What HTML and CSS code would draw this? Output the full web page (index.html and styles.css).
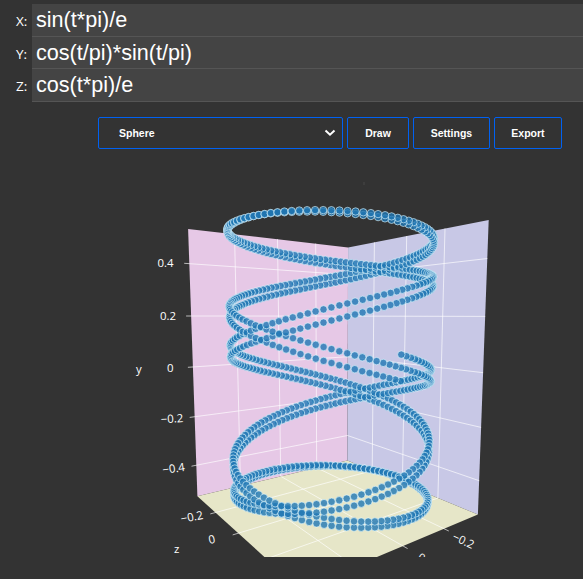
FILE: index.html
```html
<!DOCTYPE html>
<html lang="en"><head><meta charset="utf-8"><title>Parametric plot</title><link rel="stylesheet" href="styles.css"></head>
<body>
<form class="equations">
<label class="row"><span class="axis">X:</span><span class="field">sin(t*pi)/e</span></label>
<label class="row"><span class="axis">Y:</span><span class="field">cos(t/pi)*sin(t/pi)</span></label>
<label class="row"><span class="axis">Z:</span><span class="field">cos(t*pi)/e</span></label>
</form>
<div class="toolbar">
<button class="btn select" type="button">Sphere<svg class="chevron" viewBox="0 0 12 8"><path d="M1.5 1.5 6 5.7 10.5 1.5"/></svg></button>
<button class="btn draw" type="button">Draw</button>
<button class="btn settings" type="button">Settings</button>
<button class="btn export" type="button">Export</button>
</div>
<svg class="plot" viewBox="0 157 583 400" width="583" height="400">
<g id="walls"></g><g id="grid"></g><g id="curve"></g>
<g class="ticks">
<text x="157.500" y="267">0.4</text>
<text x="160" y="320">0.2</text>
<text x="167" y="372">0</text>
<text transform="translate(161 423.500) rotate(-4)">−0.2</text>
<text transform="translate(163 474) rotate(-8)">−0.4</text>
<text transform="translate(181.500 523) rotate(-11)">−0.2</text>
<text transform="translate(209.500 544) rotate(-13)">0</text>
<text transform="translate(451.500 539.500) rotate(25)">−0.2</text>
<text transform="translate(417 560) rotate(25)">0</text>
<text x="136" y="373">y</text>
<text x="174" y="553">z</text>
</g>
<rect class="speck" x="363" y="182" width="2" height="3"/>
</svg>
<script>
// Half-extents of the axes box
const a = .39, h = .53;
// Camera projection coefficients
const m = [-1.4291, -.0019, 1.0445, .006, .1228, -1.7605, .1718, -.0021, -.346, -.0651, -.472];
function project(x, y, z) {
  const w = m[8] * x + m[9] * y + m[10] * z + 1;
  return [330 + 150 * (m[0] * x + m[1] * y + m[2] * z + m[3]) / w,
          370 + 150 * (m[4] * x + m[5] * y + m[6] * z + m[7]) / w, w];
}
const pt = p => project(...p).slice(0, 2).map(v => v.toFixed(1)).join(',');
const poly = (c, ...ps) => `<polygon class="${c}" points="${ps.map(pt).join(' ')}"/>`;
const line = (...ps) => `<polyline points="${ps.map(pt).join(' ')}"/>`;
document.getElementById('walls').innerHTML =
  poly('left', [-a, h, -a], [a, h, -a], [a, -h, -a], [-a, -h, -a]) +
  poly('right', [-a, h, -a], [-a, h, a], [-a, -h, a], [-a, -h, -a]) +
  poly('floor', [-a, -h, -a], [a, -h, -a], [a, -h, a], [-a, -h, a]);
// Grid lines run slightly past the box to form the tick marks
let g = '';
const o = .41;
for (const v of [-.2, 0, .2]) g += line([v, h, -a], [v, -h, -a], [v, -h, o]) + line([-a, h, v], [-a, -h, v], [o, -h, v]);
for (const v of [-.4, -.2, 0, .2, .4]) g += line([o, v, -a], [-a, v, -a], [-a, v, a]);
document.getElementById('grid').innerHTML = g;
// Curve samples, drawn from far to near
const dots = [];
for (let i = 0; i <= 1000; i++) {
  const t = i * .02;
  dots.push(project(Math.sin(t * Math.PI) / Math.E, Math.cos(t / Math.PI) * Math.sin(t / Math.PI), Math.cos(t * Math.PI) / Math.E));
}
dots.sort((p, q) => q[2] - p[2]);
document.getElementById('curve').innerHTML = dots.map(d => `<circle cx="${d[0].toFixed(1)}" cy="${d[1].toFixed(1)}" r="3.7"/>`).join('');
</script></body></html>
```
FILE: styles.css
```css
body{margin:0;background:#333;color:#fff;height:579px;overflow:hidden;font-family:"Liberation Sans",sans-serif}
.equations{display:grid;grid-template-rows:33px 32px 33px;margin:0;padding-top:4px}
.row{display:flex}
.axis{width:32px;box-sizing:border-box;padding:7px 0 0 16px;font:13.5px/20px "Open Sans",sans-serif}
.field{flex:1;box-sizing:border-box;background:#444;border-bottom:1px solid #555;padding-left:4px;font-size:21.6px;line-height:31px}
.toolbar{display:flex;gap:4px;padding:15px 0 8px 98px;height:32px}
.btn{box-sizing:border-box;height:32px;margin:0;padding:0;background:#333;border:1px solid #0061f2;border-radius:2px;color:#fff;font:bold 10.5px "Liberation Sans",sans-serif}
.select{width:245px;display:flex;align-items:center;justify-content:space-between;padding:0 6px 0 20px}
.draw{width:62px}
.settings{width:77px}
.export{width:68px}
.chevron{width:12px;height:8px;fill:none;stroke:#fff;stroke-width:2}
.plot{display:block}
.left{fill:#e6c8e6}
.right{fill:#c8c8e6}
.floor{fill:#e6e6c8}
#grid{fill:none;stroke:#fff;stroke-opacity:.65;stroke-width:1}
#curve{fill:#1f77b4;fill-opacity:.8;stroke:#e0f8ff;stroke-opacity:.9;stroke-width:.7}
.ticks{fill:#fff;font:11.4px "Open Sans",sans-serif}
.speck{fill:#3d3d3d}
```
